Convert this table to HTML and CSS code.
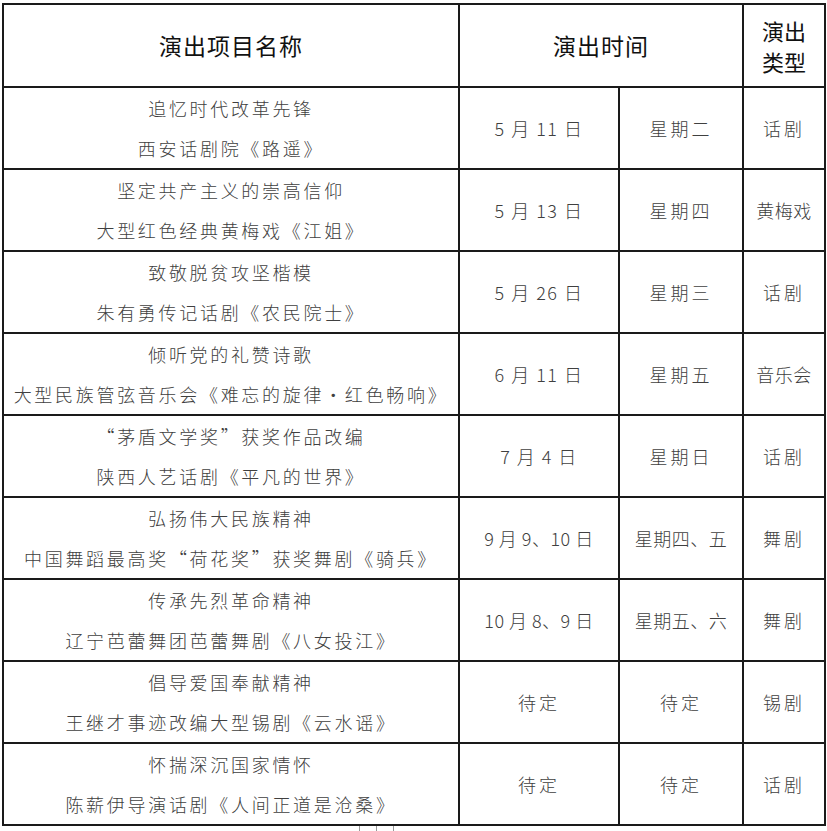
FILE: index.html
```html
<!DOCTYPE html>
<html lang="zh-CN">
<head>
<meta charset="utf-8">
<title>演出项目</title>
<link rel="stylesheet" href="styles.css">
</head>
<body>
<table class="schedule">
  <colgroup>
    <col class="c-name">
    <col class="c-date">
    <col class="c-week">
    <col class="c-type">
  </colgroup>
  <thead>
    <tr class="head-row">
      <th>演出项目名称</th>
      <th colspan="2">演出时间</th>
      <th class="th-type">演出<br>类型</th>
    </tr>
  </thead>
  <tbody>
    <tr>
      <td class="name">追忆时代改革先锋<br>西安话剧院《路遥》</td>
      <td class="date">5 月 11 日</td>
      <td>星期二</td>
      <td>话剧</td>
    </tr>
    <tr>
      <td class="name">坚定共产主义的崇高信仰<br>大型红色经典黄梅戏《江姐》</td>
      <td class="date">5 月 13 日</td>
      <td>星期四</td>
      <td class="tight">黄梅戏</td>
    </tr>
    <tr>
      <td class="name">致敬脱贫攻坚楷模<br>朱有勇传记话剧《农民院士》</td>
      <td class="date">5 月 26 日</td>
      <td>星期三</td>
      <td>话剧</td>
    </tr>
    <tr>
      <td class="name">倾听党的礼赞诗歌<br>大型民族管弦音乐会《难忘的旋律·红色畅响》</td>
      <td class="date">6 月 11 日</td>
      <td>星期五</td>
      <td class="tight">音乐会</td>
    </tr>
    <tr>
      <td class="name">“茅盾文学奖”获奖作品改编<br>陕西人艺话剧《平凡的世界》</td>
      <td class="date">7 月 4 日</td>
      <td>星期日</td>
      <td>话剧</td>
    </tr>
    <tr>
      <td class="name">弘扬伟大民族精神<br>中国舞蹈最高奖“荷花奖”获奖舞剧《骑兵》</td>
      <td class="tight">9 月 9、10 日</td>
      <td class="tight">星期四、五</td>
      <td>舞剧</td>
    </tr>
    <tr>
      <td class="name">传承先烈革命精神<br>辽宁芭蕾舞团芭蕾舞剧《八女投江》</td>
      <td class="tight">10 月 8、9 日</td>
      <td class="tight">星期五、六</td>
      <td>舞剧</td>
    </tr>
    <tr>
      <td class="name">倡导爱国奉献精神<br>王继才事迹改编大型锡剧《云水谣》</td>
      <td>待定</td>
      <td>待定</td>
      <td>锡剧</td>
    </tr>
    <tr>
      <td class="name">怀揣深沉国家情怀<br>陈薪伊导演话剧《人间正道是沧桑》</td>
      <td>待定</td>
      <td>待定</td>
      <td>话剧</td>
    </tr>
  </tbody>
</table>
<div class="stub">
  <span class="stub-cell"></span><span class="stub-cell"></span>
</div>
</body>
</html>
```

FILE: styles.css
```css
html, body {
  margin: 0;
  padding: 0;
  background: #ffffff;
}

body {
  font-family: "Noto Sans CJK SC", "Noto Sans", sans-serif;
  overflow: hidden;
  height: 831px;
}

.schedule {
  border-collapse: collapse;
  table-layout: fixed;
  width: 824px;
  margin: 3px 0 0 2px;
}

.c-name { width: 456px; }
.c-date { width: 160px; }
.c-week { width: 124px; }
.c-type { width: 82px; }

.schedule th,
.schedule td {
  border: 2px solid #1a1a1a;
  padding: 0;
  text-align: center;
  vertical-align: middle;
}

.schedule th {
  font-size: 23px;
  font-weight: 400;
  color: #111;
  letter-spacing: 1px;
  line-height: 31px;
}

.head-row {
  height: 83px;
}

.schedule th.th-type {
  letter-spacing: 0;
  font-size: 22px;
}

.schedule tbody tr {
  height: 82px;
}

.schedule td {
  font-size: 18px;
  font-weight: 300;
  color: #404040;
  letter-spacing: 3px;
  line-height: 40px;
  white-space: nowrap;
}

.schedule td.name {
  letter-spacing: 2.7px;
}

.schedule td.date {
  letter-spacing: 1.5px;
}

.schedule td.tight {
  letter-spacing: 0.5px;
}

.stub {
  display: flex;
  margin: 0 0 0 359px;
  height: 6px;
}

.stub-cell {
  width: 16px;
  height: 6px;
  border-left: 1px solid #999;
}

.stub-cell:last-child {
  border-right: 1px solid #999;
}
```
